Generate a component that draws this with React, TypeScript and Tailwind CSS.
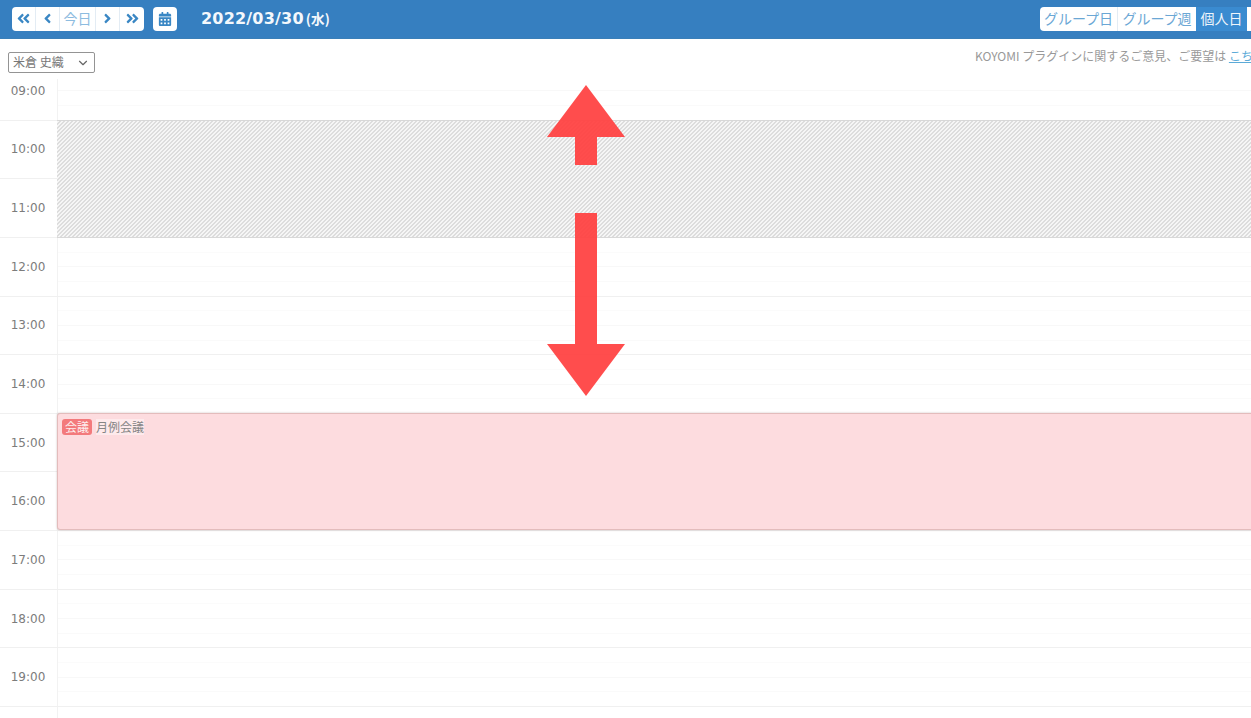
import React from "react";
import { ChevronDown } from "lucide-react";
import { FaAngleDoubleLeft, FaAngleDoubleRight, FaAngleLeft, FaAngleRight, FaCalendarAlt } from "react-icons/fa";

const hours = ["09:00","10:00","11:00","12:00","13:00","14:00","15:00","16:00","17:00","18:00","19:00",""];
const font = "font-['Noto_Sans_CJK_JP','Open_Sans',sans-serif]";

function NavCell({ children, last, wide }: { children: React.ReactNode; last?: boolean; wide?: boolean }) {
  return (
    <div className={`flex h-full items-center justify-center text-[#3a87c4] ${wide ? "w-[37px]" : "w-[24px]"} ${last ? "" : "border-r border-[#e3ecf4]"}`}>
      {children}
    </div>
  );
}

function HourRow({ label }: { label: string }) {
  return (
    <div className="flex h-[58.65px] border-b border-[#f0f0f0]">
      <div className="flex w-[57px] shrink-0 items-center justify-center pr-[1px] font-['DejaVu_Sans',sans-serif] text-[12px] text-[#7c7c7c]">
        {label}
      </div>
      <div className="flex flex-1 flex-col border-l border-[#f2f2f2]">
        <div className="flex-1 border-b border-[#fbfbfb]" />
        <div className="flex-1 border-b border-[#f8f8f8]" />
        <div className="flex-1 border-b border-[#fafafa]" />
        <div className="flex-1" />
      </div>
    </div>
  );
}

export default function App() {
  return (
    <div className={`relative h-[718px] w-[1251px] overflow-hidden bg-white ${font}`}>
      <header className="relative z-20 flex h-[39px] items-center border-b border-[#3a7fb8] bg-[#367fc0] pb-[1px] pl-3">
        <div className="flex h-[24px] w-[132px] items-center overflow-hidden rounded-[4px] bg-white">
          <NavCell><FaAngleDoubleLeft size={15} /></NavCell>
          <NavCell><FaAngleLeft size={15} /></NavCell>
          <NavCell wide><span className="text-[14px] text-[#8dbce0]">今日</span></NavCell>
          <NavCell><FaAngleRight size={15} /></NavCell>
          <NavCell last><FaAngleDoubleRight size={15} /></NavCell>
        </div>
        <div className="ml-[9px] flex h-[24px] w-[24px] items-center justify-center rounded-[4px] bg-white text-[#3a87c4]">
          <FaCalendarAlt size={14} />
        </div>
        <div className="ml-[24px] flex items-baseline font-['DejaVu_Sans',sans-serif] text-[16px] font-bold tracking-[0.2px] text-[#f4f8fc]">
          2022/03/30
          <span className={`ml-[2px] text-[13.5px] font-bold ${font}`}>(水)</span>
        </div>
        <div className="ml-auto flex h-[24px] items-center overflow-hidden rounded-l-[4px] bg-white text-[14px] text-[#6ba7d5]">
          <div className="flex h-full w-[78px] items-center justify-center border-r border-[#e3ecf4]">グループ日</div>
          <div className="flex h-full w-[78px] items-center justify-center">グループ週</div>
          <div className="flex h-full w-[51px] items-center justify-center bg-[#3a8bd0] text-[#eef5fb]">個人日</div>
          <div className="h-full w-[4px]" />
        </div>
      </header>

      <div className="relative z-10 h-[40px] bg-white">
        <div className="absolute left-[8px] top-[13px] flex h-[21px] w-[87px] items-center justify-between rounded-[2px] border border-[#949494] bg-white px-[4px] text-[12px] text-[#777777]">
          <span className="-mt-[1px]">米倉 史織</span>
          <ChevronDown size={14} className="text-[#666666]" />
        </div>
        <div className="absolute right-0 top-[8px] flex w-[276px] whitespace-nowrap text-[12px] leading-[18px] text-[#999999]">
          <span>KOYOMI プラグインに関するご意見、ご要望は&nbsp;</span>
          <span className="text-[#5cabd8] underline">こちら</span>
        </div>
      </div>

      <div className="relative -mt-[17px]">
        {hours.map((h, i) => <HourRow key={i} label={h} />)}

        <div className="absolute left-[57px] right-0 top-[58px] h-[118px] border-y border-[#d8d8d8] bg-[linear-gradient(135deg,#f6f6f6_25%,#dddddd_25%,#dddddd_50%,#f6f6f6_50%,#f6f6f6_75%,#dddddd_75%)] bg-[length:4px_4px]" />

        <div className="absolute left-[57px] right-[-4px] top-[351px] h-[117px] rounded-[3px] border border-[#e3bcbc] bg-[#fddcdf] shadow-[0_0_2px_rgba(120,80,80,0.4)]">
          <div className="flex items-center pl-[4px] pt-[5px]">
            <span className="flex h-[16px] w-[30px] items-center justify-center rounded-[3px] bg-[#f37a7c] text-[12px] text-[#fdeeee]">会議</span>
            <span className="ml-[4px] bg-white/40 text-[12px] leading-[16px] text-[#858585]">月例会議</span>
          </div>
        </div>
      </div>

      <svg className="absolute left-[547px] top-[85px] z-30" width="78" height="311" viewBox="0 0 78 311">
        <polygon points="39,0 78,52 50,52 50,80 28,80 28,52 0,52" fill="#ff4040" fillOpacity="0.93" />
        <polygon points="28,128 50,128 50,259 78,259 39,311 0,259 28,259" fill="#ff4040" fillOpacity="0.93" />
      </svg>
    </div>
  );
}
